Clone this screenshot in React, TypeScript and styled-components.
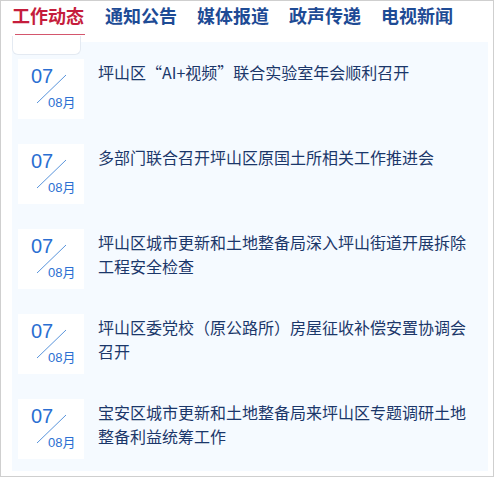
import styled, { createGlobalStyle } from "styled-components";

const GlobalStyle = createGlobalStyle`
  html, body {
    margin: 0;
    padding: 0;
    background: #ffffff;
  }
  body {
    font-family: "Liberation Sans", "Noto Sans CJK SC", sans-serif;
  }
`;

const Frame = styled.div`
  position: relative;
  width: 494px;
  height: 477px;
  box-sizing: border-box;
  border: 1px solid #cfcfcf;
  display: flex;
  flex-direction: column;
  overflow: hidden;
  background: #ffffff;
`;

const TabBar = styled.div`
  height: 41px;
  flex: none;
  display: flex;
  align-items: flex-start;
  gap: 20px;
  padding: 5px 0 0 11px;
  box-sizing: border-box;
`;

const Tab = styled.div<{ $active?: boolean }>`
  display: flex;
  flex-direction: column;
  font-family: "Noto Sans CJK SC", sans-serif;
  font-size: 18px;
  line-height: 18px;
  font-weight: 700;
  color: ${(p) => (p.$active ? "#c51d3c" : "#1e4b95")};
  white-space: nowrap;
`;

const ActiveLabel = styled.span`
  display: block;
`;

const Underline = styled.span`
  display: block;
  height: 1px;
  width: 70px;
  margin: 10px 0 0 3px;
  background: rgba(197, 29, 60, 0.75);
`;

// small white tab notch that peeks into the list panel
const Notch = styled.div`
  position: absolute;
  left: 11px;
  top: 35px;
  width: 69px;
  height: 19px;
  box-sizing: border-box;
  background: #ffffff;
  border: 1px solid #e4eaf2;
  border-top: none;
  border-radius: 0 0 6px 6px;
`;

const Panel = styled.div`
  flex: 1;
  margin: 0 5px 5px 11px;
  background: #f5faff;
  padding: 17px 0 0 6px;
  display: flex;
  flex-direction: column;
  gap: 25px;
  overflow: hidden;
`;

const Item = styled.div`
  display: flex;
  align-items: flex-start;
  gap: 14px;
`;

const DateBox = styled.div`
  position: relative;
  flex: none;
  width: 66px;
  height: 60px;
  box-sizing: border-box;
  background: #ffffff;
  padding: 7px 0 0 13px;
  display: flex;
  flex-direction: column;
  align-items: flex-start;
`;

const Day = styled.span`
  font-family: "Liberation Sans", sans-serif;
  font-size: 20px;
  line-height: 20px;
  color: #2b6fd2;
`;

const Month = styled.span`
  margin: 10px 0 0 17px;
  font-family: "Liberation Sans", "Noto Sans CJK SC", sans-serif;
  font-size: 13px;
  line-height: 13px;
  color: #2b6fd2;
`;

const Slash = styled.svg`
  position: absolute;
  left: 0;
  top: 0;
`;

const Title = styled.div`
  max-width: 372px;
  margin-top: 1px;
  font-family: "Noto Sans CJK SC", sans-serif;
  font-size: 16px;
  line-height: 24px;
  color: #1b376a;
`;

const tabs = ["工作动态", "通知公告", "媒体报道", "政声传递", "电视新闻"];

const news = [
  { day: "07", month: "08月", title: "坪山区“AI+视频”联合实验室年会顺利召开" },
  { day: "07", month: "08月", title: "多部门联合召开坪山区原国土所相关工作推进会" },
  { day: "07", month: "08月", title: "坪山区城市更新和土地整备局深入坪山街道开展拆除工程安全检查" },
  { day: "07", month: "08月", title: "坪山区委党校（原公路所）房屋征收补偿安置协调会召开" },
  { day: "07", month: "08月", title: "宝安区城市更新和土地整备局来坪山区专题调研土地整备利益统筹工作" },
];

export default function App() {
  return (
    <>
      <GlobalStyle />
      <Frame>
        <TabBar>
          {tabs.map((t, i) =>
            i === 0 ? (
              <Tab key={t} $active>
                <ActiveLabel>{t}</ActiveLabel>
                <Underline />
              </Tab>
            ) : (
              <Tab key={t}>{t}</Tab>
            )
          )}
        </TabBar>
        <Notch />
        <Panel>
          {news.map((n, i) => (
            <Item key={i}>
              <DateBox>
                <Day>{n.day}</Day>
                <Month>{n.month}</Month>
                <Slash width="66" height="60" viewBox="0 0 66 60">
                  <line x1="19" y1="44" x2="48" y2="16" stroke="#5a95dc" strokeWidth="1" />
                </Slash>
              </DateBox>
              <Title>{n.title}</Title>
            </Item>
          ))}
        </Panel>
      </Frame>
    </>
  );
}
